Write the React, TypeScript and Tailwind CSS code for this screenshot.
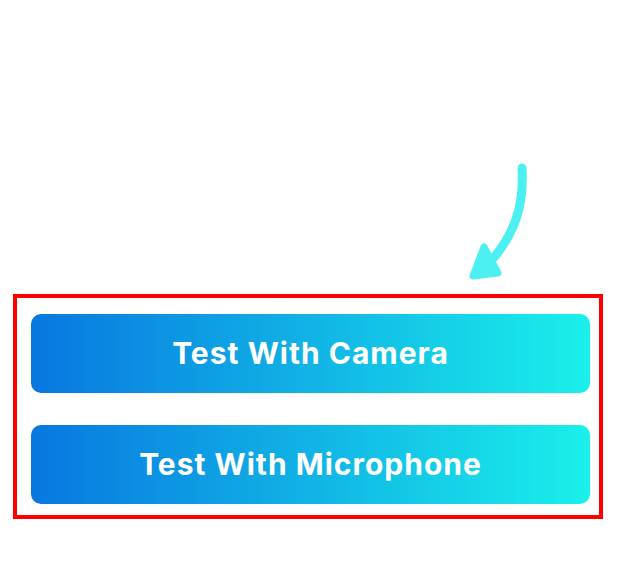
import React from 'react'

function Arrow() {
  return (
    <svg width="80" height="125" viewBox="0 0 80 125" className="block ml-[460px]">
      <path d="M62 8 C64 42 57 72 30 102" fill="none" stroke="#4cf0f0" strokeWidth="9" strokeLinecap="round" />
      <path d="M24 87 L13 116 L38 113 Z" fill="#4cf0f0" stroke="#4cf0f0" strokeWidth="7" strokeLinejoin="round" />
    </svg>
  )
}

function GradientButton({ label }: { label: string }) {
  return (
    <button className="h-[79px] w-full rounded-[10px] bg-linear-to-r/srgb from-[#0877e0] to-[#1af0ea] text-white text-[30px] tracking-[1px] font-bold flex items-center justify-center">
      {label}
    </button>
  )
}

export default function App() {
  return (
    <div className="w-[622px] h-[580px] bg-white" style={{ fontFamily: 'Inter, "Noto Sans", sans-serif' }}>
      <div className="pt-[160px]">
        <Arrow />
      </div>
      <div className="ml-[13px] mt-[9px] w-[590px] border-4 border-[#ff0000] pt-4 pb-[11px] pl-[14px] pr-[9px] flex flex-col gap-8">
        <GradientButton label="Test With Camera" />
        <GradientButton label="Test With Microphone" />
      </div>
    </div>
  )
}
